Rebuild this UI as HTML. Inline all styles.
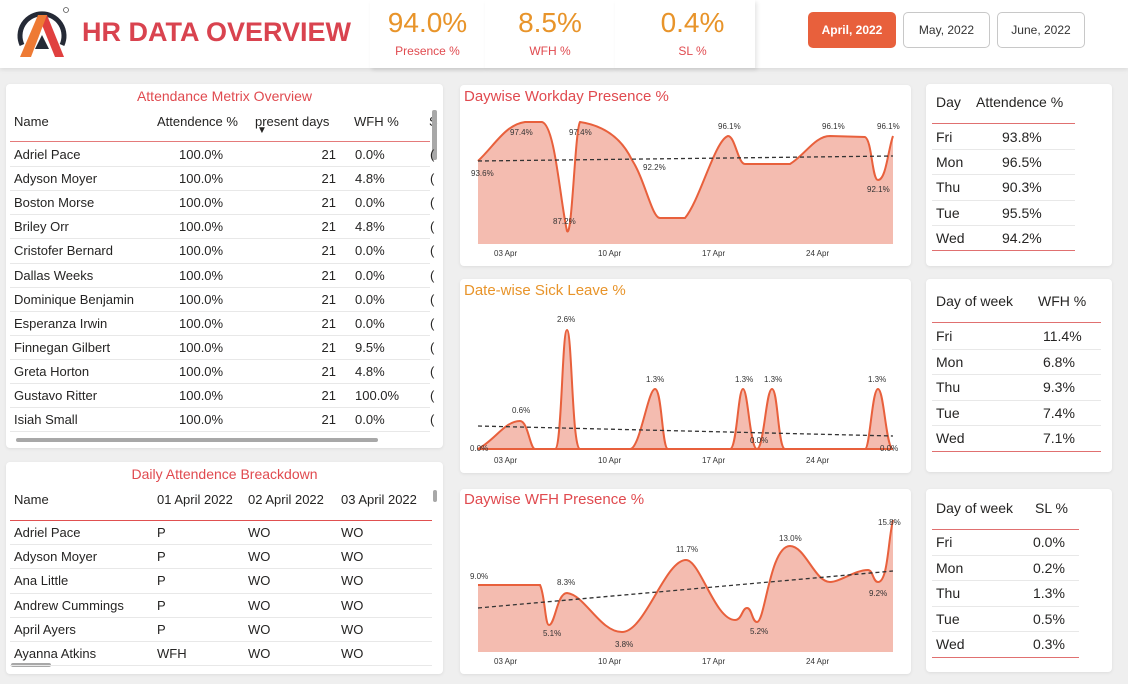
<!DOCTYPE html><html><head><meta charset="utf-8"><style>
*{margin:0;padding:0;box-sizing:border-box}
body{width:1128px;height:684px;background:#efefef;font-family:"Liberation Sans",sans-serif;color:#252423;position:relative;overflow:hidden;font-size:13px}
.a{position:absolute}
.p{position:absolute;background:#fff;border-radius:4px;box-shadow:0 1px 3px rgba(0,0,0,.08)}
.t{position:absolute;white-space:nowrap}
.btn{position:absolute;top:12px;height:36px;border:1px solid #c8c8c8;border-radius:5px;background:#fff;font-size:12px;text-align:center;line-height:34px;color:#333}
.ct{font-size:15px;color:#e04a4f}
svg text{font-family:"Liberation Sans",sans-serif;font-size:8px;fill:#333}
</style></head><body>
<div class="a" style="left:0;top:0;width:1128px;height:68px;background:#fff;box-shadow:0 2px 4px rgba(0,0,0,.08)"></div>
<svg class="a" style="left:16px;top:5px" width="58" height="54" viewBox="0 0 58 54">
<path d="M6 40 A22 22 0 1 1 46 40" fill="none" stroke="#252a36" stroke-width="5"/>
<path d="M22 10 L31 10 L48 52 L39 52 Z" fill="#e0403f"/>
<path d="M22 10 L31 10 L15 52 L4 52 Z" fill="#ee7a34"/>
<path d="M19 44 L26 30 L33 44 Z" fill="#252a36"/>
<circle cx="50" cy="5" r="2.5" fill="none" stroke="#555" stroke-width=".8"/>
</svg>
<div class="t" style="left:82px;top:17px;font-size:27px;font-weight:bold;color:#d9434f">HR DATA OVERVIEW</div>
<div class="a" style="left:370px;top:0;width:115px;height:68px;background:#fff;box-shadow:2px 2px 4px rgba(0,0,0,.1)"></div>
<div class="a" style="left:485px;top:0;width:130px;height:68px;background:#fff;box-shadow:2px 2px 4px rgba(0,0,0,.1)"></div>
<div class="a" style="left:615px;top:0;width:140px;height:68px;background:#fff;box-shadow:2px 2px 4px rgba(0,0,0,.1)"></div>
<div class="t" style="left:370px;width:115px;text-align:center;top:7px;font-size:28px;color:#e8942a">94.0%</div>
<div class="t" style="left:370px;width:115px;text-align:center;top:44px;font-size:12px;color:#e04a4f">Presence %</div>
<div class="t" style="left:485px;width:130px;text-align:center;top:7px;font-size:28px;color:#e8942a">8.5%</div>
<div class="t" style="left:485px;width:130px;text-align:center;top:44px;font-size:12px;color:#e04a4f">WFH %</div>
<div class="t" style="left:620px;width:145px;text-align:center;top:7px;font-size:28px;color:#e8942a">0.4%</div>
<div class="t" style="left:620px;width:145px;text-align:center;top:44px;font-size:12px;color:#e04a4f">SL %</div>
<div class="btn" style="left:808px;width:88px;background:#e8603c;border-color:#e8603c;color:#fff;font-weight:bold">April, 2022</div>
<div class="btn" style="left:903px;width:87px">May, 2022</div>
<div class="btn" style="left:997px;width:88px">June, 2022</div>

<div class="p" style="left:6px;top:84px;width:437px;height:364px;overflow:hidden">
<div class="t ct" style="left:0;width:437px;text-align:center;top:4px;font-size:14px">Attendance Metrix Overview</div>
<div class="t" style="left:8px;top:30px">Name</div>
<div class="t" style="left:151px;top:30px">Attendence %</div>
<div class="t" style="left:249px;top:30px">present days</div>
<div class="t" style="left:251px;top:41px;font-size:10px">▼</div>
<div class="t" style="left:348px;top:30px">WFH %</div>
<div class="t" style="left:423px;top:30px">S</div>
<div class="a" style="left:4px;top:57px;width:420px;height:1px;background:#e47a7a"></div>
<div class="a" style="left:426px;top:26px;width:5px;height:50px;background:#a8a8a8;border-radius:2px"></div>
<div class="a" style="left:10px;top:354px;width:362px;height:4px;background:#a8a8a8;border-radius:2px"></div>
<div id="r1"></div>
</div>

<div class="p" style="left:6px;top:462px;width:437px;height:212px;overflow:hidden">
<div class="t ct" style="left:0;width:437px;text-align:center;top:4px;font-size:14px">Daily Attendence Breackdown</div>
<div class="t" style="left:8px;top:30px">Name</div>
<div class="t" style="left:151px;top:30px">01 April 2022</div>
<div class="t" style="left:242px;top:30px">02 April 2022</div>
<div class="t" style="left:335px;top:30px">03 April 2022</div>
<div class="a" style="left:4px;top:58px;width:422px;height:1px;background:#e05050"></div>
<div class="a" style="left:427px;top:28px;width:4px;height:12px;background:#a8a8a8;border-radius:2px"></div>
<div class="a" style="left:5px;top:201px;width:40px;height:4px;background:#a8a8a8;border-radius:2px"></div>
<div id="r2"></div>
</div>

<div class="p" style="left:460px;top:85px;width:451px;height:181px"></div>
<div class="t ct" style="left:464px;top:88px;color:#e04a4f">Daywise Workday Presence %</div>
<div class="p" style="left:460px;top:279px;width:451px;height:194px"></div>
<div class="t ct" style="left:464px;top:282px;color:#e8942a">Date-wise Sick Leave %</div>
<div class="p" style="left:460px;top:489px;width:451px;height:185px"></div>
<div class="t ct" style="left:464px;top:491px">Daywise WFH Presence %</div>

<svg class="a" style="left:0;top:0" width="1128" height="684">
<g>
<path d="M478 161 C495 145 505 125 525 122 L542 122 C555 125 560 200 567 231 C572 240 575 130 580 122 C600 125 620 135 632 160 C645 180 652 218 660 218 L685 218 C700 200 715 140 728 136 C735 136 738 164 745 164 L790 164 C805 155 815 136 830 136 L865 137 C872 140 872 180 878 180 C886 180 888 150 893 136 L893 244 L478 244 Z" fill="#f4bcb0" stroke="none"/>
<path d="M478 161 C495 145 505 125 525 122 L542 122 C555 125 560 200 567 231 C572 240 575 130 580 122 C600 125 620 135 632 160 C645 180 652 218 660 218 L685 218 C700 200 715 140 728 136 C735 136 738 164 745 164 L790 164 C805 155 815 136 830 136 L865 137 C872 140 872 180 878 180 C886 180 888 150 893 136" fill="none" stroke="#e8603c" stroke-width="2"/>
<line x1="478" y1="161" x2="893" y2="156" stroke="#333" stroke-width="1.3" stroke-dasharray="4,3"/>
<text x="471" y="176">93.6%</text><text x="510" y="135">97.4%</text><text x="569" y="135">97.4%</text><text x="553" y="224">87.2%</text><text x="643" y="170">92.2%</text><text x="718" y="129">96.1%</text><text x="822" y="129">96.1%</text><text x="867" y="192">92.1%</text><text x="877" y="129">96.1%</text>
<text x="494" y="256">03 Apr</text><text x="598" y="256">10 Apr</text><text x="702" y="256">17 Apr</text><text x="806" y="256">24 Apr</text>
</g>
<g>
<path d="M478 449 C495 440 505 421 520 421 C528 421 530 449 535 449 L555 449 C562 449 562 330 567 330 C572 330 572 449 580 449 L630 449 C640 449 648 389 655 389 C662 389 662 449 668 449 L730 449 C737 449 738 389 743 389 C748 389 750 449 757 449 C764 449 766 389 772 389 C778 389 778 449 785 449 L865 449 C870 449 872 389 878 389 C884 389 886 449 893 449 Z" fill="#f4bcb0" stroke="#e8603c" stroke-width="2"/>
<line x1="478" y1="426" x2="893" y2="436" stroke="#333" stroke-width="1.3" stroke-dasharray="4,3"/>
<text x="470" y="451">0.0%</text><text x="512" y="413">0.6%</text><text x="557" y="322">2.6%</text><text x="646" y="382">1.3%</text><text x="735" y="382">1.3%</text><text x="764" y="382">1.3%</text><text x="750" y="443">0.0%</text><text x="868" y="382">1.3%</text><text x="880" y="451">0.0%</text>
<text x="494" y="463">03 Apr</text><text x="598" y="463">10 Apr</text><text x="702" y="463">17 Apr</text><text x="806" y="463">24 Apr</text>
</g>
<g>
<path d="M478 585 L540 585 C545 595 545 625 549 625 C555 625 557 593 567 593 C585 595 600 632 622 632 C645 632 665 560 686 560 C700 560 715 620 735 620 C742 620 742 608 747 608 C752 608 752 622 757 622 C765 622 770 546 790 546 C805 546 815 582 830 582 C840 582 855 570 868 570 C873 570 873 582 878 582 C888 582 888 540 893 520 L893 652 L478 652 Z" fill="#f4bcb0"/>
<path d="M478 585 L540 585 C545 595 545 625 549 625 C555 625 557 593 567 593 C585 595 600 632 622 632 C645 632 665 560 686 560 C700 560 715 620 735 620 C742 620 742 608 747 608 C752 608 752 622 757 622 C765 622 770 546 790 546 C805 546 815 582 830 582 C840 582 855 570 868 570 C873 570 873 582 878 582 C888 582 888 540 893 520" fill="none" stroke="#e8603c" stroke-width="2"/>
<line x1="478" y1="608" x2="893" y2="571" stroke="#333" stroke-width="1.3" stroke-dasharray="4,3"/>
<text x="470" y="579">9.0%</text><text x="543" y="636">5.1%</text><text x="557" y="585">8.3%</text><text x="615" y="647">3.8%</text><text x="676" y="552">11.7%</text><text x="750" y="634">5.2%</text><text x="779" y="541">13.0%</text><text x="869" y="596">9.2%</text><text x="878" y="525">15.8%</text>
<text x="494" y="664">03 Apr</text><text x="598" y="664">10 Apr</text><text x="702" y="664">17 Apr</text><text x="806" y="664">24 Apr</text>
</g>
</svg>

<div class="p" style="left:926px;top:84px;width:186px;height:182px">
<div class="t" style="left:10px;top:10px;font-size:14px">Day</div><div class="t" style="left:50px;top:10px;font-size:14px">Attendence %</div>
<div class="a" style="left:6px;top:39px;width:143px;height:1px;background:#e07070"></div>
<div id="t1"></div></div>
<div class="p" style="left:926px;top:279px;width:186px;height:193px">
<div class="t" style="left:10px;top:14px;font-size:14px">Day of week</div><div class="t" style="left:112px;top:14px;font-size:14px">WFH %</div>
<div class="a" style="left:6px;top:43px;width:169px;height:1px;background:#e07070"></div>
<div id="t2"></div></div>
<div class="p" style="left:926px;top:489px;width:186px;height:183px">
<div class="t" style="left:10px;top:11px;font-size:14px">Day of week</div><div class="t" style="left:109px;top:11px;font-size:14px">SL %</div>
<div class="a" style="left:6px;top:40px;width:147px;height:1px;background:#e07070"></div>
<div id="t3"></div></div>

<script>
function rows(id,top,h,data,cols,w,last){let s='';data.forEach((r,i)=>{let y=top+i*h;s+=`<div class="a" style="left:${w[0]}px;top:${y+h-1}px;width:${w[1]}px;height:1px;background:${(last&&i==data.length-1)?'#e07070':'#e8e8e8'}"></div>`;r.forEach((c,j)=>{let cc=cols[j];s+=`<div class="t" style="${cc.r?'right:'+cc.r:'left:'+cc.l}px;top:${y+4}px;font-size:${cc.f||13}px">${c}</div>`})});document.getElementById(id).outerHTML=s}
const n1=["Adriel Pace","Adyson Moyer","Boston Morse","Briley Orr","Cristofer Bernard","Dallas Weeks","Dominique Benjamin","Esperanza Irwin","Finnegan Gilbert","Greta Horton","Gustavo Ritter","Isiah Small"];
const w1=["0.0%","4.8%","0.0%","4.8%","0.0%","0.0%","0.0%","0.0%","9.5%","4.8%","100.0%","0.0%"];
rows('r1',59,24.1,n1.map((n,i)=>[n,"100.0%","21",w1[i],"("]),[{l:8},{l:173},{r:107},{l:349},{l:424}],[4,420]);
const n2=["Adriel Pace","Adyson Moyer","Ana Little","Andrew Cummings","April Ayers","Ayanna Atkins"];
rows('r2',59,24.2,n2.map((n,i)=>[n,i==5?"WFH":"P","WO","WO"]),[{l:8},{l:151},{l:242},{l:335}],[4,422]);
const d=["Fri","Mon","Thu","Tue","Wed"];
rows('t1',41,25.2,d.map((x,i)=>[x,["93.8%","96.5%","90.3%","95.5%","94.2%"][i]]),[{l:10,f:14},{l:76,f:14}],[6,143],1);
rows('t2',45,25.5,d.map((x,i)=>[x,["11.4%","6.8%","9.3%","7.4%","7.1%"][i]]),[{l:10,f:14},{l:117,f:14}],[6,169],1);
rows('t3',41,25.6,d.map((x,i)=>[x,["0.0%","0.2%","1.3%","0.5%","0.3%"][i]]),[{l:10,f:14},{l:107,f:14}],[6,147],1);
</script>
</body></html>
